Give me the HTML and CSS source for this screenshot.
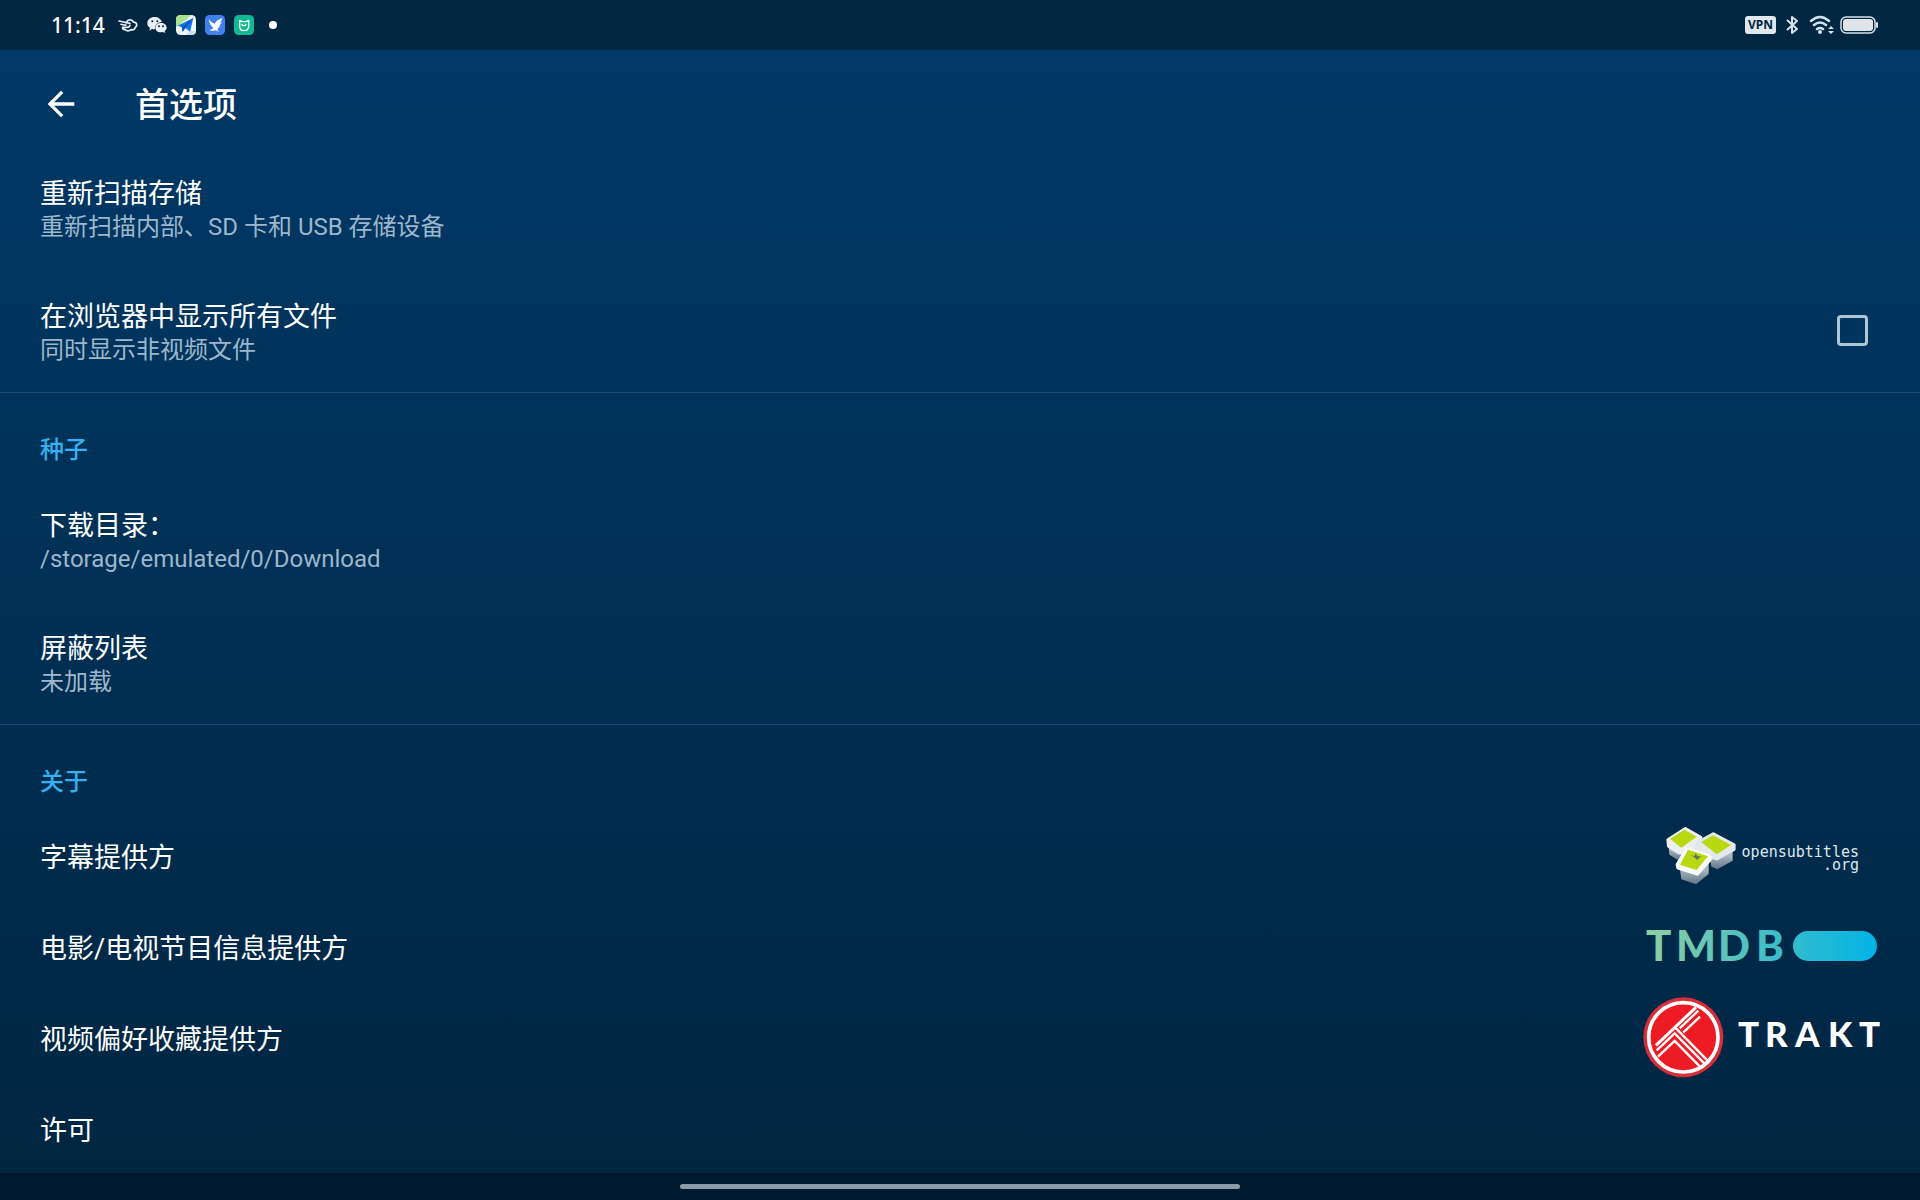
FILE: index.html
```html
<!DOCTYPE html>
<html lang="zh-CN">
<head>
    <meta charset="UTF-8">
    <meta name="viewport" content="width=device-width, initial-scale=1.0">
    <title>首选项</title>
    <link rel="stylesheet" href="styles.css">
</head>
<body>
    <!-- Status bar -->
    <div class="status-bar">
        <div class="status-left">
            <span class="clock">11:14</span>
            <svg class="status-icon" viewBox="0 0 60 60" fill="none" stroke="#e8f0f6" stroke-width="5" stroke-linecap="round" stroke-linejoin="round">
                <path d="M3 18 Q14 20 24 23 L36 25 M9 28 Q16 31 24 30 M26 20 Q32 12 42 16 Q45 22 53 23 Q60 31 52 37 Q50 46 39 44 Q30 51 21 44 Q12 43 14 37 L25 37 Q33 38 36 31"/>
            </svg>
            <svg class="status-icon" viewBox="0 0 60 60">
                <path fill="#e8f0f6" d="M23 6 C10 6 1 14 1 25 C1 31 4 36 9 39 L7 47 L15 42 Q19 43 24 43 C22 32 30 22 45 21 C42 12 34 6 23 6 Z"/>
                <path fill="#e8f0f6" d="M42 24 C32 24 25 30 25 38 C25 46 32 52 42 52 L48 51 L55 54 L53 48 C57 45 59 42 59 38 C59 30 52 24 42 24 Z"/>
                <g fill="#032641"><circle cx="16" cy="19" r="3"/><circle cx="31" cy="19" r="3"/><circle cx="36" cy="34" r="3"/><circle cx="48" cy="34" r="3"/></g>
            </svg>
            <svg class="status-icon" viewBox="0 0 60 60">
                <rect width="60" height="60" rx="14" fill="#eef6fb"/>
                <path d="M0 36 V14 Q0 0 14 0 H46 L8 32 Z" fill="#a5e08e"/>
                <path d="M30 60 L44 46 L60 52 Q58 60 46 60 Z" fill="#c5e2f8"/>
                <path d="M5 32 L52 9 L42 50 L28 39 L20 50 L18 37 Z" fill="#1272e8"/>
                <path d="M52 9 L18 37 L20 50 L28 39 Z" fill="#0753c4"/>
            </svg>
            <svg class="status-icon" viewBox="0 0 60 60">
                <rect width="60" height="60" rx="14" fill="#3f80ee"/>
                <path fill="#fff" d="M11 13 Q20 25 29 26 Q32 17 52 9 Q50 18 45 22 L51 23 L46 27 Q45 38 37 43 L42 50 L32 46 Q23 49 13 46 Q23 43 25 38 Q14 31 11 13 Z"/>
            </svg>
            <svg class="status-icon" viewBox="0 0 60 60">
                <rect width="60" height="60" rx="14" fill="#10b992"/>
                <path fill="none" stroke="#fff" stroke-width="4" stroke-linecap="round" stroke-linejoin="round" d="M17 16 L25 20 H36 L44 16 V33 Q44 47 30 47 Q17 47 17 33 Z M24 29 Q30 35 36 29"/>
            </svg>
            <span class="more-dot"></span>
        </div>
        <div class="status-right">
            <span class="vpn">VPN</span>
            <svg class="bluetooth" viewBox="0 0 13 20" fill="none" stroke="#d5e1eb" stroke-width="2" stroke-linejoin="round">
                <path d="M1 5 L11 14 L6 18 V2 L11 6 L1 15"/>
            </svg>
            <svg class="wifi" viewBox="0 0 25 20" fill="none" stroke="#d5e1eb" stroke-width="2.5" stroke-linecap="round">
                <path d="M2 6 Q11 -2 20 6 M5 10 Q11 5 17 10 M8 14 Q11 12 14 14"/>
                <circle cx="11" cy="17" r="2" fill="#d5e1eb" stroke="none"/>
                <path fill="#d5e1eb" stroke="none" d="M19 14 L22 11 L25 14 Z M19 16 H25 L22 19 Z"/>
            </svg>
            <svg class="battery" viewBox="0 0 38 18">
                <rect x="1" y="1" width="34" height="16" rx="5" fill="none" stroke="#d5e1eb" stroke-width="1.5"/>
                <rect x="3" y="3" width="30" height="12" rx="3" fill="#e0e4e8"/>
                <rect x="36" y="6" width="2" height="6" rx="1" fill="#d5e1eb"/>
            </svg>
        </div>
    </div>

    <header class="app-bar">
        <button type="button" class="back" aria-label="返回">
            <svg viewBox="0 0 24 24" fill="#fff"><path d="M20 11H7.83l5.59-5.59L12 4l-8 8 8 8 1.41-1.41L7.83 13H20v-2z"/></svg>
        </button>
        <h1>首选项</h1>
    </header>

    <main class="prefs">
        <section class="group">
            <a class="pref" href="#rescan">
                <span class="pref-text">
                    <span class="pref-title">重新扫描存储</span>
                    <span class="pref-summary">重新扫描内部、SD 卡和 USB 存储设备</span>
                </span>
            </a>
            <label class="pref" for="showAll">
                <span class="pref-text">
                    <span class="pref-title">在浏览器中显示所有文件</span>
                    <span class="pref-summary">同时显示非视频文件</span>
                </span>
                <input type="checkbox" id="showAll" name="showAll">
            </label>
        </section>

        <section class="group">
            <h2>种子</h2>
            <a class="pref" href="#download">
                <span class="pref-text">
                    <span class="pref-title">下载目录：</span>
                    <span class="pref-summary">/storage/emulated/0/Download</span>
                </span>
            </a>
            <a class="pref" href="#blocklist">
                <span class="pref-text">
                    <span class="pref-title">屏蔽列表</span>
                    <span class="pref-summary">未加载</span>
                </span>
            </a>
        </section>

        <section class="group">
            <h2>关于</h2>
            <a class="pref single" href="#subtitles">
                <span class="pref-title">字幕提供方</span>
                <svg class="logo" viewBox="0 1 240 90">
                    <defs>
                        <linearGradient id="side" x1="0" y1="0" x2="0" y2="1">
                            <stop offset="0.3" stop-color="#aab6c0"/>
                            <stop offset="1" stop-color="#5f7486"/>
                        </linearGradient>
                    </defs>
                    <g transform="translate(20 10) scale(0.3333)" stroke-linejoin="round">
                        <!-- back left box -->
                        <path d="M26 78 L28 104 L54 120 L70 95 Z" fill="url(#side)"/>
                        <path d="M24 60 L76 26 L122 52 L120 74 L80 100 L56 98 L26 78 Z" fill="#eceff1" stroke="#eceff1" stroke-width="10"/>
                        <path d="M30 57 L73 29 L110 50 L64 83 Z" fill="#b9d80f"/>
                        <!-- back right box -->
                        <path d="M150 108 L154 140 L172 148 L218 122 V90 Z" fill="url(#side)"/>
                        <path d="M112 68 L160 42 L222 75 V88 L170 116 L100 96 Z" fill="#e3e8ec" stroke="#e3e8ec" stroke-width="10"/>
                        <path d="M124 66 L159 46 L213 75 L170 103 Z" fill="#b9d80f"/>
                        <!-- front box -->
                        <path d="M60 148 L64 178 L108 193 L146 162 V130 Z" fill="url(#side)"/>
                        <path d="M52 134 L80 86 L150 108 V120 L112 162 L54 144 Z" fill="#f7f8f8" stroke="#f7f8f8" stroke-width="10"/>
                        <path d="M60 134 L84 89 L144 109 L110 150 Z" fill="#b9d80f"/>
                        <path d="M94 106 L104 108 L106 100 L112 107 L124 110 L116 114 L113 121 L106 115 Z" fill="#5d7564"/>
                    </g>
                    <text class="subs-text" x="219" y="47" text-anchor="end">opensubtitles</text>
                    <text class="subs-text" x="219" y="60" text-anchor="end">.org</text>
                </svg>
            </a>
            <a class="pref single" href="#movies">
                <span class="pref-title">电影/电视节目信息提供方</span>
                <svg class="logo" viewBox="0 1 240 90">
                    <defs>
                        <linearGradient id="tmdb" gradientUnits="userSpaceOnUse" x1="6" y1="0" x2="237" y2="0">
                            <stop offset="0" stop-color="#90cea1"/>
                            <stop offset="0.56" stop-color="#3cbec9"/>
                            <stop offset="1" stop-color="#00b3e5"/>
                        </linearGradient>
                    </defs>
                    <text class="tmdb-text" x="6 36 78 116" y="60" fill="url(#tmdb)">TMDB</text>
                    <rect x="153" y="30" width="84" height="30" rx="15" fill="url(#tmdb)"/>
                </svg>
            </a>
            <a class="pref single" href="#favorites">
                <span class="pref-title">视频偏好收藏提供方</span>
                <svg class="logo" viewBox="0 1 240 90">
                    <g transform="scale(0.3333)" fill="none" stroke="#fff" stroke-width="7">
                        <circle cx="130" cy="136" r="120" fill="#d62f3a" stroke="none"/>
                        <circle cx="130" cy="136" r="104" fill="#ed1c24" stroke-width="11"/>
                        <path stroke-width="9" d="M168 46 L48 160"/>
                        <path d="M175 56 L119 109 M180 74 L130 121"/>
                        <path d="M105 106 L203 206"/>
                        <path d="M50 175 L104 124 L193 214"/>
                        <path d="M54 194 L104 147 L180 224"/>
                    </g>
                    <text class="trakt-text" x="98 125 155 188 219" y="55">TRAKT</text>
                </svg>
            </a>
            <a class="pref single" href="#license">
                <span class="pref-title">许可</span>
            </a>
        </section>
    </main>

    <div class="nav-bar"><span class="handle"></span></div>
</body>
</html>
```

FILE: styles.css
```css
* {
    box-sizing: border-box;
}

body {
    font-family: Roboto, "Noto Sans CJK SC", sans-serif;
    margin: 0;
    height: 100vh;
    display: flex;
    flex-direction: column;
    overflow: hidden;
    color: #fff;
    background: linear-gradient(#003a68, #002540);
}

/* Status bar */
.status-bar {
    flex: none;
    height: 50px;
    padding: 0 42px 0 51px;
    display: flex;
    justify-content: space-between;
    align-items: center;
    background: #002642;
}

.status-left {
    display: flex;
    align-items: center;
    gap: 9px;
}

.status-right {
    display: flex;
    align-items: center;
    gap: 10px;
}

.clock {
    font-family: "Noto Sans", sans-serif;
    font-size: 21px;
    font-weight: 500;
    line-height: 24px;
    margin-right: 4px;
}

.status-icon {
    width: 20px;
    height: 20px;
}

.more-dot {
    width: 8px;
    height: 8px;
    margin-left: 6px;
    border-radius: 50%;
    background: #fff;
}

.vpn {
    width: 31px;
    height: 18px;
    border-radius: 3px;
    background: #dfe8ef;
    color: #002642;
    font-family: "Noto Sans", sans-serif;
    font-size: 12px;
    font-weight: 700;
    line-height: 18px;
    text-align: center;
}

.bluetooth {
    width: 13px;
    height: 20px;
}

.wifi {
    width: 25px;
    height: 20px;
    margin-right: -4px;
}

.battery {
    width: 38px;
    height: 18px;
}

/* App bar */
.app-bar {
    flex: none;
    height: 96px;
    padding: 12px 41px 0;
    display: flex;
    align-items: center;
    gap: 54px;
}

.back {
    width: 40px;
    height: 40px;
    padding: 0;
    border: none;
    background: none;
    cursor: pointer;
}

.back svg {
    display: block;
    width: 40px;
    height: 40px;
}

h1 {
    margin: 0;
    padding-top: 2px;
    font-size: 34px;
    font-weight: 500;
    line-height: 40px;
}

/* Preference list */
.prefs {
    flex: 1;
    min-height: 0;
    overflow: hidden;
}

.group + .group {
    border-top: 1px solid #1c4a70;
}

h2 {
    margin: 0;
    padding: 42px 40px 13px;
    font-size: 24px;
    font-weight: 500;
    line-height: 30px;
    color: #38b0f0;
}

.pref {
    min-height: 123px;
    padding: 0 40px;
    display: flex;
    justify-content: space-between;
    align-items: center;
    color: inherit;
    text-decoration: none;
    cursor: pointer;
}

.pref.single {
    min-height: 91px;
}

.pref-text {
    display: flex;
    flex-direction: column;
}

.pref-title {
    font-size: 27px;
    line-height: 40px;
}

.pref.single .pref-title {
    padding-top: 4px;
}

.pref-summary {
    font-size: 24px;
    line-height: 27px;
    color: #9db6cb;
}

.pref input {
    appearance: none;
    width: 31px;
    height: 31px;
    margin: 0 12px 0 0;
    border: 3px solid #adc5d9;
    border-radius: 4px;
}

.pref input:checked {
    background: #38b0f0;
}

/* Provider logos */
.logo {
    width: 240px;
    height: 90px;
}

.subs-text {
    font-family: "DejaVu Sans Mono", monospace;
    font-size: 15px;
    fill: #dde6ee;
}

.tmdb-text {
    font-family: Lato, sans-serif;
    font-size: 42px;
    font-weight: 900;
}

.trakt-text {
    font-family: Lato, sans-serif;
    font-size: 35px;
    font-weight: 900;
    fill: #fff;
}

/* Gesture navigation */
.nav-bar {
    flex: none;
    height: 27px;
    padding-bottom: 1px;
    display: flex;
    justify-content: center;
    align-items: center;
    background: #00192e;
}

.handle {
    width: 560px;
    max-width: 60%;
    height: 5px;
    border-radius: 3px;
    background: #8a9aa8;
}
```
